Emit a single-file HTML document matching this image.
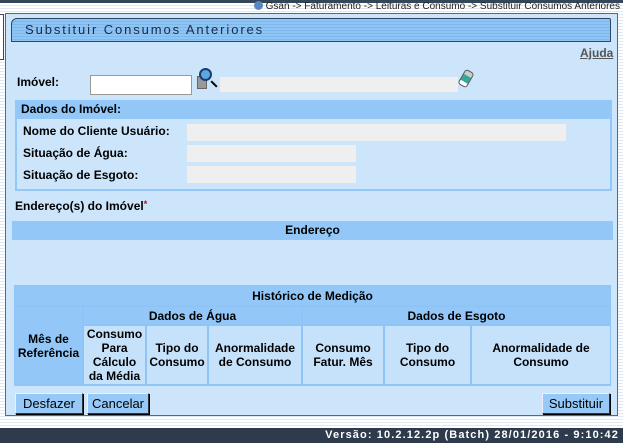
<!DOCTYPE html>
<html><head><meta charset="utf-8"><style>
*{margin:0;padding:0;box-sizing:border-box}
body{width:623px;height:443px;overflow:hidden;position:relative;font-family:"Liberation Sans",Arial,sans-serif;font-size:12px;color:#000;
background:repeating-linear-gradient(#fff 0 2px,#dfe9f5 2px 3px);}
.a{position:absolute}
.f{background:#efefef}
.c{position:absolute;display:flex;align-items:center;justify-content:center;text-align:center;font-weight:bold;font-size:12px;line-height:14px;background:#c6e2fb;border:1px solid #8ec4f6}
.h{background:#92c7f8}
.b{position:absolute;top:393px;height:21px;border:1px solid #333;border-top-color:#eef;border-left-color:#eef;background:#96c9f7;font-size:13px;display:flex;align-items:center;justify-content:center;box-shadow:1px 1px 0 #000}
</style></head><body>
<div class="a" style="left:0;top:0;width:623px;height:3px;background:#34465a"></div>
<div class="a" style="left:245px;top:1px;width:375px;font-size:10px;color:#222;text-align:right;white-space:nowrap"><span style="display:inline-block;width:9px;height:9px;border-radius:50%;background:#5b86c0;vertical-align:-1px;margin-right:3px"></span>Gsan -&gt; Faturamento -&gt; Leituras e Consumo -&gt; Substituir Consumos Anteriores</div>
<div class="a" style="left:0;top:14px;width:4px;height:46px;border:1px solid #445;border-left:none;background:#fff"></div>
<div class="a" style="left:5px;top:13px;width:613px;height:403px;background:#cce5fb;border:1px solid #4f6a8a"></div>
<div class="a" style="left:11px;top:18px;width:600px;height:24px;border:1px solid #2f4766;border-radius:6px 2px 0 0;background:repeating-linear-gradient(#8fc5f5 0 2px,#7db7ec 2px 3px)"></div>
<div class="a" style="left:25px;top:22px;font-size:13px;letter-spacing:1.9px;color:#1b2a44">Substituir Consumos Anteriores</div>
<div class="a" style="left:580px;top:46px;font-weight:bold;text-decoration:underline;color:#555">Ajuda</div>
<div class="a" style="left:17px;top:75px;font-weight:bold">Imóvel:</div>
<div class="a" style="left:90px;top:75px;width:102px;height:20px;background:#fff;border:1px solid #999"></div>
<div class="a" style="left:197px;top:76px;width:10px;height:13px;background:#999;border:1px solid #666"></div>
<div class="a" style="left:199px;top:68px;width:13px;height:13px;border:2px solid #1d3c6e;border-radius:50%;background:#5aa8e0"></div>
<div class="a" style="left:210px;top:83px;width:8px;height:2px;background:#000;transform:rotate(45deg)"></div>
<div class="a f" style="left:220px;top:77px;width:238px;height:15px"></div>
<div class="a" style="left:461px;top:70px;width:10px;height:17px;border:1px solid #555;border-radius:3px;background:linear-gradient(#ccc 0 30%,#3a9 30% 75%,#fff 75%);transform:rotate(30deg)"></div>
<div class="a" style="left:15px;top:100px;width:597px;height:91px;border:2px solid #92c7f8"></div>
<div class="a h" style="left:15px;top:100px;width:597px;height:19px;padding:2px 6px;font-weight:bold">Dados do Imóvel:</div>
<div class="a" style="left:23px;top:124px;font-weight:bold">Nome do Cliente Usuário:</div>
<div class="a" style="left:23px;top:146px;font-weight:bold">Situação de Água:</div>
<div class="a" style="left:23px;top:168px;font-weight:bold">Situação de Esgoto:</div>
<div class="a f" style="left:187px;top:124px;width:379px;height:17px"></div>
<div class="a f" style="left:187px;top:145px;width:169px;height:17px"></div>
<div class="a f" style="left:187px;top:166px;width:169px;height:17px"></div>
<div class="a" style="left:15px;top:199px;font-weight:bold">Endereço(s) do Imóvel<span style="color:#c00;font-size:9px;vertical-align:top">*</span></div>
<div class="a h" style="left:12px;top:221px;width:601px;height:19px;text-align:center;font-weight:bold;padding-top:2px">Endereço</div>
<div class="a" style="left:14px;top:285px;width:597px;height:101px;background:#92c7f8"></div>
<div class="c h" style="left:14px;top:286px;width:597px;height:20px">Histórico de Medição</div>
<div class="c" style="left:14px;top:306px;width:69px;height:79px;background:#92c7f8">Mês de<br>Referência</div>
<div class="c h" style="left:83px;top:306px;width:219px;height:19px">Dados de Água</div>
<div class="c h" style="left:302px;top:306px;width:309px;height:19px">Dados de Esgoto</div>
<div class="c" style="left:83px;top:325px;width:63px;height:60px">Consumo<br>Para<br>Cálculo<br>da Média</div>
<div class="c" style="left:146px;top:325px;width:62px;height:60px">Tipo do<br>Consumo</div>
<div class="c" style="left:208px;top:325px;width:94px;height:60px">Anormalidade<br>de Consumo</div>
<div class="c" style="left:302px;top:325px;width:82px;height:60px">Consumo<br>Fatur. Mês</div>
<div class="c" style="left:384px;top:325px;width:87px;height:60px">Tipo do<br>Consumo</div>
<div class="c" style="left:471px;top:325px;width:140px;height:60px">Anormalidade de<br>Consumo</div>
<div class="b" style="left:15px;width:68px">Desfazer</div>
<div class="b" style="left:87px;width:62px">Cancelar</div>
<div class="b" style="left:542px;width:68px">Substituir</div>
<div class="a" style="left:0;top:428px;width:623px;height:15px;background:#2d3b4c;color:#fff;font-weight:bold;font-size:11px;letter-spacing:1.1px;text-align:right;padding-right:4px;line-height:15px">Versão: 10.2.12.2p (Batch) 28/01/2016 - 9:10:42</div>
</body></html>
